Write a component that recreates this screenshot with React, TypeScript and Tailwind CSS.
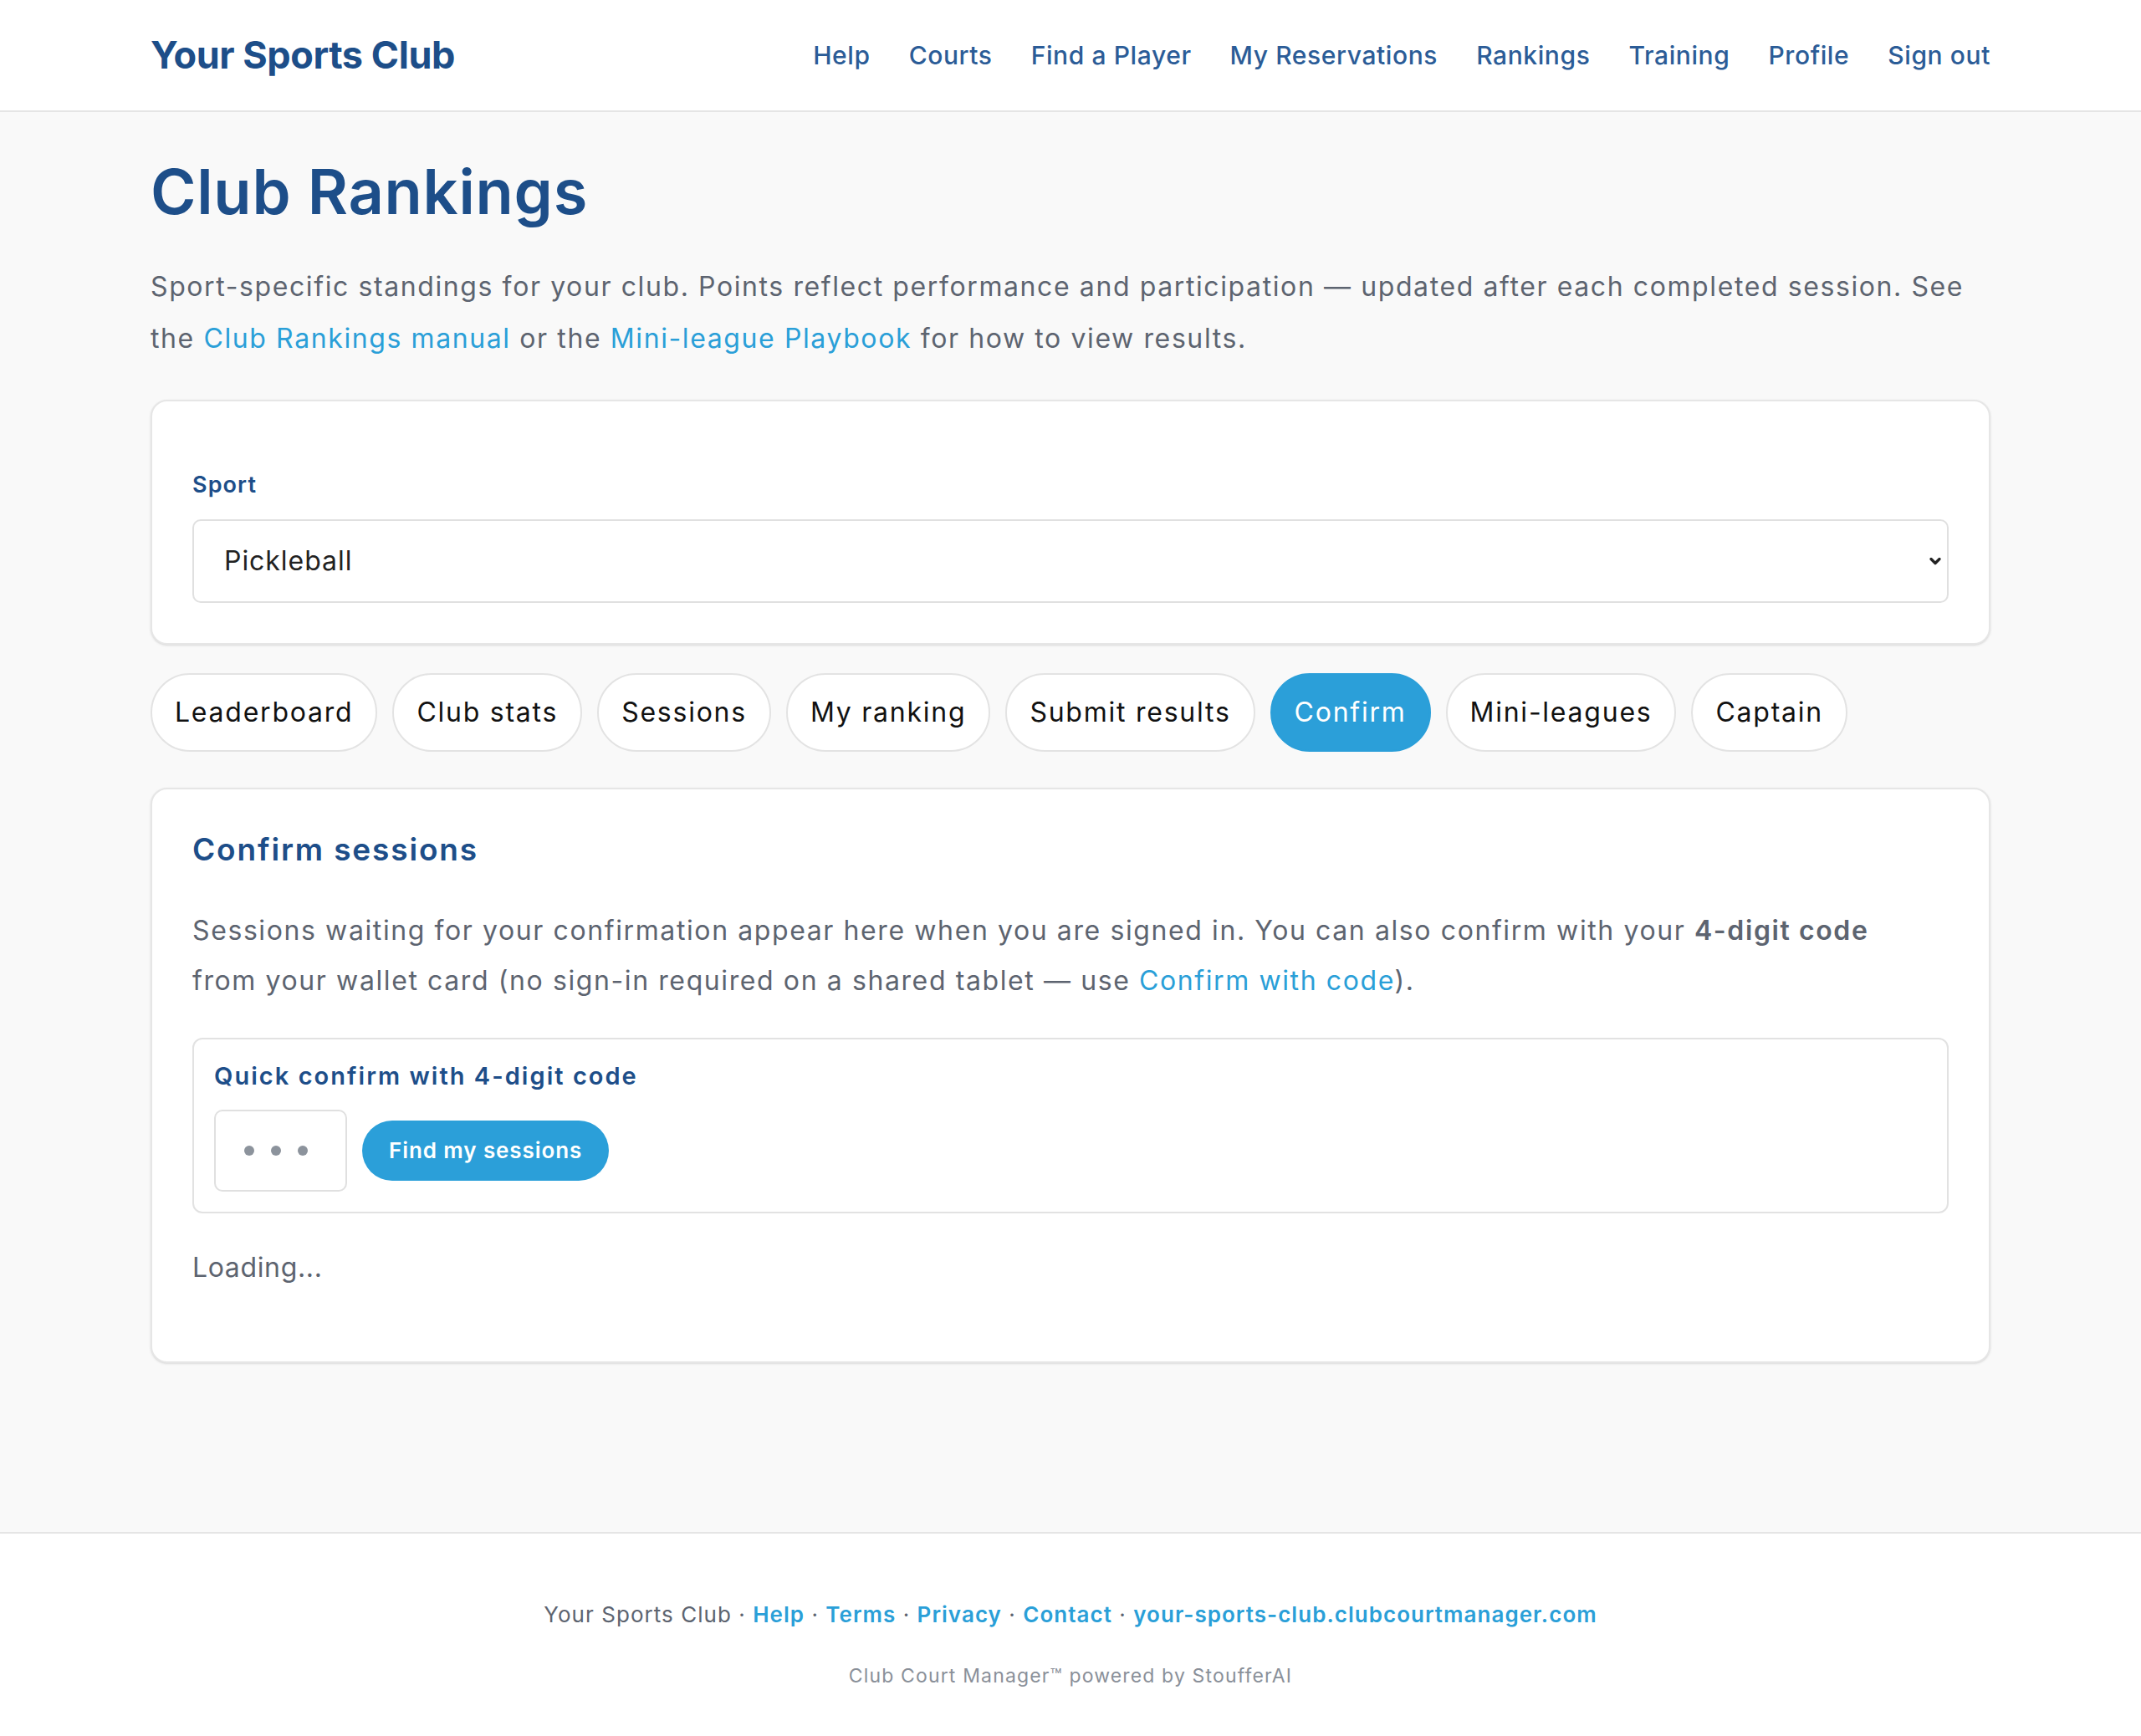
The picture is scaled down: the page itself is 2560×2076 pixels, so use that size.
import { ChevronDown } from "lucide-react";

const navLinks = [
  "Help",
  "Courts",
  "Find a Player",
  "My Reservations",
  "Rankings",
  "Training",
  "Profile",
  "Sign out",
];

const tabs = [
  "Leaderboard",
  "Club stats",
  "Sessions",
  "My ranking",
  "Submit results",
  "Confirm",
  "Mini-leagues",
  "Captain",
];

const Header = () => (
  <header className="h-[134px] bg-white border-b-2 border-[#e5e5e5]">
    <div className="w-[2200px] mx-auto h-full flex items-center justify-between">
      <a className="text-[45px] font-bold tracking-[-0.01em] text-[#1d4e89]">
        Your Sports Club
      </a>
      <nav className="flex items-center gap-x-[46px]">
        {navLinks.map((link) => (
          <a
            key={link}
            className="text-[30px] font-medium tracking-[0.02em] text-[#2b5c97] cursor-pointer"
          >
            {link}
          </a>
        ))}
      </nav>
    </div>
  </header>
);

const SportCard = () => (
  <div className="mt-[42px] bg-white border-2 border-[#e6e6e6] rounded-[20px] shadow-sm px-[48px] pt-[80px] pb-[48px]">
    <label className="block text-[27px] leading-[39px] font-semibold tracking-[0.04em] text-[#1d4e89]">
      Sport
    </label>
    <div className="mt-[22px] h-[100px] flex items-center justify-between border-2 border-[#e0e0e0] rounded-[10px] pl-[36px] pr-[4px] text-[32px] tracking-[0.03em] text-[#222]">
      <span>Pickleball</span>
      <ChevronDown size={20} strokeWidth={4} className="text-[#222]" />
    </div>
  </div>
);

const Tabs = () => (
  <div className="mt-[34px] flex items-center gap-x-[18px]">
    {tabs.map((tab) => (
      <button
        key={tab}
        className={
          tab === "Confirm"
            ? "h-[94px] px-[27px] rounded-full border-2 border-[#2b9fd9] bg-[#2b9fd9] text-white text-[32px] tracking-[0.055em]"
            : "h-[94px] px-[27px] rounded-full border-2 border-[#e3e3e3] bg-white text-[#111] text-[32px] tracking-[0.055em]"
        }
      >
        {tab}
      </button>
    ))}
  </div>
);

const ConfirmCard = () => (
  <div className="mt-[43px] bg-white border-2 border-[#e6e6e6] rounded-[20px] shadow-sm px-[48px] pt-[48px] pb-[88px]">
    <h2 className="text-[37px] leading-[47px] font-semibold tracking-[0.05em] text-[#1d4e89]">
      Confirm sessions
    </h2>
    <p className="mt-[44px] text-[32px] leading-[60px] tracking-[0.05em] text-[#5d6470]">
      Sessions waiting for your confirmation appear here when you are signed in.
      You can also confirm with your{" "}
      <strong className="font-semibold">4-digit code</strong>
      <br />
      from your wallet card (no sign-in required on a shared tablet — use{" "}
      <a className="text-[#2a9fd8] cursor-pointer">Confirm with code</a>).
    </p>
    <div className="mt-[38px] border-2 border-[#e2e2e2] rounded-[12px] p-[24px]">
      <p className="text-[29px] leading-[39px] font-semibold tracking-[0.07em] text-[#1d4e89]">
        Quick confirm with 4-digit code
      </p>
      <div className="mt-[21px] flex items-center gap-x-[18px]">
        <div className="w-[159px] h-[98px] border-2 border-[#e0e0e0] rounded-[10px] flex items-center pl-[34px] gap-x-[20px]">
          <span className="size-[12px] rounded-full bg-[#8c939c]" />
          <span className="size-[12px] rounded-full bg-[#8c939c]" />
          <span className="size-[12px] rounded-full bg-[#8c939c]" />
        </div>
        <button className="h-[72px] px-[32px] rounded-full bg-[#2b9fd9] text-white text-[26px] font-semibold tracking-[0.035em]">
          Find my sessions
        </button>
      </div>
    </div>
    <p className="mt-[41px] text-[32px] leading-[48px] tracking-[0.02em] text-[#5d6470]">
      Loading...
    </p>
  </div>
);

const Footer = () => (
  <footer className="h-[244px] bg-white border-t-2 border-[#e5e5e5] pt-[77px] flex flex-col items-center">
    <p className="text-[26px] leading-[39px] tracking-[0.04em] text-[#5d6470]">
      Your Sports Club ·{" "}
      <a className="font-semibold text-[#2a9fd8]">Help</a> ·{" "}
      <a className="font-semibold text-[#2a9fd8]">Terms</a> ·{" "}
      <a className="font-semibold text-[#2a9fd8]">Privacy</a> ·{" "}
      <a className="font-semibold text-[#2a9fd8]">Contact</a> ·{" "}
      <a className="font-semibold text-[#2a9fd8]">
        your-sports-club.clubcourtmanager.com
      </a>
    </p>
    <p className="mt-[38px] text-[23px] leading-[33px] tracking-[0.05em] text-[#8a9099]">
      Club Court Manager™ powered by StoufferAI
    </p>
  </footer>
);

export default function App() {
  return (
    <div className="min-h-screen flex flex-col bg-[#f9f9f9] font-['Inter',sans-serif]">
      <Header />
      <main className="flex-1 pt-[51px]">
        <div className="w-[2200px] mx-auto">
          <h1 className="text-[74px] leading-[1.2] font-semibold tracking-[0.01em] text-[#1d4e89]">
            Club Rankings
          </h1>
          <p className="mt-[38px] text-[32px] leading-[62px] tracking-[0.05em] text-[#5d6470]">
            Sport-specific standings for your club. Points reflect performance
            and participation — updated after each completed session. See
            <br />
            the{" "}
            <a className="text-[#2a9fd8] cursor-pointer">Club Rankings manual</a>{" "}
            or the{" "}
            <a className="text-[#2a9fd8] cursor-pointer">Mini-league Playbook</a>{" "}
            for how to view results.
          </p>
          <SportCard />
          <Tabs />
          <ConfirmCard />
        </div>
      </main>
      <Footer />
    </div>
  );
}
